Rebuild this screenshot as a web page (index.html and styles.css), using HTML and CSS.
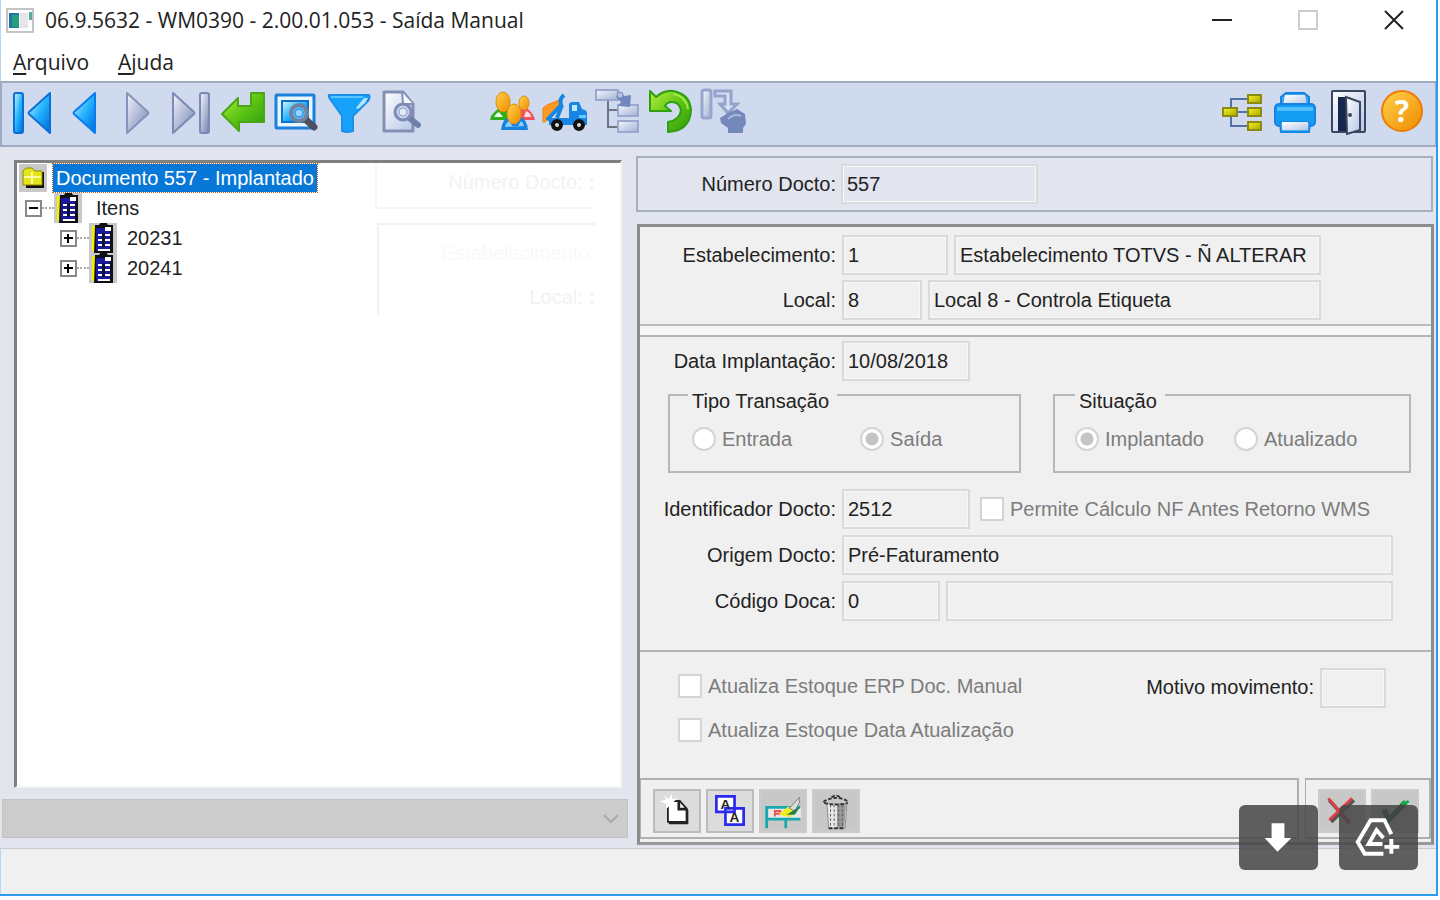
FILE: index.html
```html
<!DOCTYPE html>
<html lang="pt-BR">
<head>
<meta charset="utf-8">
<title>06.9.5632 - WM0390 - 2.00.01.053 - Saída Manual</title>
<link rel="stylesheet" href="styles.css">
</head>
<body>
<svg class="defs" aria-hidden="true">
  <defs>
    <linearGradient id="blue" x1="0" y1="0" x2="1" y2="1"><stop offset="0" stop-color="#d8f6ff"/><stop offset=".5" stop-color="#25b4ff"/><stop offset="1" stop-color="#0068d8"/></linearGradient>
    <linearGradient id="grey" x1="0" y1="0" x2="1" y2="1"><stop offset="0" stop-color="#f2f4fb"/><stop offset=".5" stop-color="#b4bdd8"/><stop offset="1" stop-color="#6d7fae"/></linearGradient>
    <linearGradient id="green" x1="0" y1="0" x2="1" y2="1"><stop offset="0" stop-color="#b8f03c"/><stop offset=".5" stop-color="#5cc414"/><stop offset="1" stop-color="#2c9a0c"/></linearGradient>
    <linearGradient id="gold" x1="0" y1="0" x2="1" y2="1"><stop offset="0" stop-color="#ffd34a"/><stop offset="1" stop-color="#f08a00"/></linearGradient>
    <linearGradient id="paper" x1="0" y1="0" x2="1" y2="1"><stop offset="0" stop-color="#ffffff"/><stop offset="1" stop-color="#b4c6e6"/></linearGradient>
    <linearGradient id="muted" x1="0" y1="0" x2="1" y2="1"><stop offset="0" stop-color="#f4f7fd"/><stop offset="1" stop-color="#9fafd4"/></linearGradient>
    <linearGradient id="node" x1="0" y1="0" x2="1" y2="1"><stop offset="0" stop-color="#f8f428"/><stop offset="1" stop-color="#a8a400"/></linearGradient>
    <symbol id="ledger" viewBox="0 0 28 30">
      <path fill="#c8c8c8" d="M0 0h28v30H0z"/><path fill="#f2f200" d="M3 3h3v25H3z"/><path fill="#101010" d="M6 2h4l2-3h5l2 3h5v28H5z"/>
      <path fill="#1818a0" d="M7 5h14v23H7z"/><path fill="#fff" d="M16 4h6v4h-6zM9 11h4v2H9zM16 11h5v2h-5zM9 16h4v2H9zM16 16h5v2h-5zM9 21h4v2H9zM16 21h5v2h-5zM9 26h12v2H9z"/>
      <path fill="#101030" d="M13 10h3v14h-3z"/>
    </symbol>
  </defs>
</svg>
<div class="window">
  <header class="titlebar">
    <svg class="app-icon" viewBox="0 0 28 25" aria-hidden="true"><path fill="#fff" stroke="#c4c4c4" stroke-width="2" d="M1 1h26v23H1z"/><path fill="#e6e6ea" d="M14 5h8v15h-8z"/><path fill="#2474a8" d="M3 5h10v15H3z"/><path fill="#23a07c" d="M6 7h7v12H6z"/><path fill="#58a8a0" d="M23 4h3v8h-3z"/></svg>
    <h1 class="title">06.9.5632 - WM0390 - 2.00.01.053 - Saída Manual</h1>
    <div class="caption-buttons">
      <button class="caption-button" aria-label="Minimizar"><svg viewBox="0 0 20 20"><path d="M0 10h20" stroke="#222" stroke-width="2"/></svg></button>
      <button class="caption-button" aria-label="Maximizar" disabled><svg viewBox="0 0 20 20"><path d="M1 1h18v18H1z" fill="none" stroke="#ccc" stroke-width="2"/></svg></button>
      <button class="caption-button" aria-label="Fechar"><svg viewBox="0 0 20 20"><path d="M1 1l18 18M19 1L1 19" stroke="#222" stroke-width="2"/></svg></button>
    </div>
  </header>
  <nav class="menubar">
    <button class="menu-item"><span class="mnemonic">A</span>rquivo</button>
    <button class="menu-item"><span class="mnemonic">A</span>juda</button>
  </nav>
  <div class="toolbar">
    <div class="tool-group">
      <button class="tool" aria-label="Primeiro"><svg viewBox="0 0 44 44"><g fill="url(#blue)" stroke="#0b6fd6" stroke-width="2" stroke-linejoin="round"><rect x="5" y="3" width="9" height="40" rx="2"/><path d="M41 3v40L20 24q-1-1 0-2z"/></g></svg></button>
      <button class="tool" aria-label="Anterior"><svg viewBox="0 0 44 44"><path d="M33 3v40L12 24q-1-1 0-2z" fill="url(#blue)" stroke="#0b7cf0" stroke-width="2" stroke-linejoin="round"/></svg></button>
      <button class="tool" aria-label="Próximo"><svg viewBox="0 0 44 44"><path d="M12 3v40l21-19q1-1 0-2z" fill="url(#grey)" stroke="#8794ba" stroke-width="2" stroke-linejoin="round"/></svg></button>
      <button class="tool" aria-label="Último"><svg viewBox="0 0 44 44"><g fill="url(#grey)" stroke="#7b89b4" stroke-width="2" stroke-linejoin="round"><path d="M5 3v40l21-19q1-1 0-2z"/><rect x="32" y="3" width="9" height="40" rx="2"/></g></svg></button>
      <button class="tool" aria-label="Vá para"><svg viewBox="0 0 44 44"><path d="M1 24L17 8v8h13V3h13v29H18v9z" fill="url(#green)" stroke="#4aa616" stroke-width="2" stroke-linejoin="round"/></svg></button>
      <button class="tool" aria-label="Pesquisar"><svg viewBox="0 0 44 44"><rect x="2" y="5" width="38" height="33" rx="1" fill="#e8f6ff" stroke="#1a80d8" stroke-width="3"/><path d="M8 11h26v21H8z" fill="url(#blue)" stroke="#1470c4" stroke-width="2"/><path d="M30 28l10 9" stroke="#4c5060" stroke-width="7" stroke-linecap="round"/><circle cx="25" cy="23" r="8" fill="#58bcf8" stroke="#71809c" stroke-width="4"/><circle cx="25" cy="23" r="4" fill="#8cd8ff" stroke="#2f7fe0"/></svg></button>
      <button class="tool" aria-label="Filtro"><svg viewBox="0 0 44 44"><path d="M2 5h40q2 3-2 7L26 26v15q-6 2-11 0V26L3 9Q1 6 2 5z" fill="#16a2fa" stroke="#1c8fe8" stroke-width="2" stroke-linejoin="round"/><path d="M4 7h32" stroke="#59c4ff" stroke-width="2"/><path d="M29 18l8-10h4l-3 5-7 6z" fill="#b8e6ff"/></svg></button>
      <button class="tool" aria-label="Detalhar"><svg viewBox="0 0 44 44"><path d="M4 2h19l10 12v27H4z" fill="url(#paper)" stroke="#8390b4" stroke-width="3" stroke-linejoin="round"/><path d="M22 2l1 12h10" fill="#f4f6fc" stroke="#8390b4" stroke-width="2"/><path d="M28 27l10 8" stroke="#6f7fac" stroke-width="6" stroke-linecap="round"/><circle cx="23" cy="22" r="8" fill="#c8d2ea" stroke="#7d8cb4" stroke-width="3"/><circle cx="23" cy="22" r="4" fill="#e4eaf8" stroke="#91a0c4"/></svg></button>
    </div>
    <div class="tool-group">
      <button class="tool" aria-label="Usuários"><svg viewBox="0 0 44 44"><path d="M0 30q0-5 9-12l12 2 1 10z" fill="#2fae1c"/><path d="M4 27q2-4 5-5l4 5z" fill="#eaffea"/><path d="M27 30l3-11 7-1q7 6 8 12z" fill="#f4515c"/><path d="M34 27l2-6q5 2 5 6z" fill="#ffe0e0"/><path d="M11 40q1-11 8-13h11q7 2 8 13z" fill="#1682e0"/><path d="M15 37q1-5 5-6l2 5h6l3-5q3 2 3 5z" fill="#8cd0ff"/><ellipse cx="13" cy="12" rx="7" ry="10" fill="url(#gold)" stroke="#e08c08"/><ellipse cx="34" cy="13" rx="5" ry="7" fill="url(#gold)" stroke="#e08c08"/><ellipse cx="24" cy="24" rx="7" ry="10" fill="url(#gold)" stroke="#e08c08"/></svg></button>
      <button class="tool" aria-label="Transporte"><svg viewBox="0 0 44 44"><path d="M0 18l4-3 12-5 1 6L2 32H0z" fill="#ff9820" stroke="#f08410"/><path d="M4 30L18 15q-2-6 3-10M19 15l-5 13" fill="none" stroke="#1587e0" stroke-width="4"/><path d="M6 28h20V14q1-2 3-2h7l3 7q5 1 5 4v12H6z" fill="#1685e4"/><path d="M29 15h5v6h-5z" fill="#b8eaff"/><path d="M36 25h7v3h-7z" fill="#65caff"/><circle cx="14" cy="35" r="4" fill="#ddd" stroke="#111" stroke-width="4"/><circle cx="36" cy="35" r="4" fill="#ddd" stroke="#111" stroke-width="4"/></svg></button>
      <button class="tool" aria-label="Estrutura" disabled><svg viewBox="0 0 44 44"><path d="M12 10v27h12M12 20h12" fill="none" stroke="#6e7484" stroke-width="2"/><g fill="url(#muted)" stroke="#9aa8ce" stroke-width="2"><rect x="0" y="0" width="22" height="10"/><rect x="22" y="15" width="20" height="11"/><rect x="22" y="31" width="20" height="11"/></g><path d="M20 7q5-8 8-1l7-1-1 12-12-1 3-4z" fill="#7288bc"/><circle cx="24" cy="5" r="3" fill="#b4c4e4" stroke="#7288bc"/></svg></button>
      <button class="tool" aria-label="Desfazer"><svg viewBox="0 0 44 44"><path d="M1 1l6 6Q15 0 24 1q17 3 18 19-1 21-23 22V32q12-2 13-12-2-8-9-8-5 0-7 4l6 5H1z" fill="url(#green)" stroke="#2f9e10" stroke-width="2" stroke-linejoin="round"/><path d="M24 4q13 2 15 15" fill="none" stroke="#a4e648" stroke-width="2"/></svg></button>
      <button class="tool" aria-label="Executar" disabled><svg viewBox="0 0 44 44"><rect x="0" y="0" width="9" height="28" rx="2" fill="url(#muted)" stroke="#97a5ce" stroke-width="3"/><path d="M13 6V1h16v13h6l-9 9-8-9h5V6z" fill="#d6e0f4" stroke="#94a3cc" stroke-width="3"/><path d="M18 28l8-5 9-4 8 5 1 10-3 4v5H26v-5l-7-5z" fill="#7488bc"/><path d="M26 29q6-6 13-3" stroke="#a9b8dc" stroke-width="2" fill="none"/></svg></button>
    </div>
    <div class="tool-group tool-group-end">
      <button class="tool" aria-label="Relacionamentos"><svg viewBox="0 0 44 44"><path d="M27 9H11v27h16M11 22h16" fill="none" stroke="#5370a8" stroke-width="2"/><g fill="url(#node)" stroke="#8c8a10" stroke-width="2"><rect x="3" y="18" width="14" height="8"/><rect x="28" y="5" width="13" height="8"/><rect x="28" y="18" width="13" height="8"/><rect x="28" y="32" width="13" height="8"/></g></svg></button>
      <button class="tool" aria-label="Imprimir"><svg viewBox="0 0 44 44"><path d="M8 15V7l5-4h18l5 4v8z" fill="#39a8f4" stroke="#1685e0" stroke-width="2"/><path d="M12 5h20l2 10H10z" fill="url(#paper)"/><rect x="2" y="14" width="40" height="22" rx="4" fill="#159df4" stroke="#1582e4" stroke-width="2"/><path d="M4 17h36v4H4z" fill="#52c0ff"/><path d="M7 32h30l-1 10H8z" fill="#48b2f6" stroke="#1888e0" stroke-width="2"/><path d="M9 32h26v8H9z" fill="url(#paper)"/></svg></button>
      <button class="tool" aria-label="Sair"><svg viewBox="0 0 44 44"><rect x="6" y="1" width="33" height="41" rx="1" fill="url(#paper)" stroke="#3c4560" stroke-width="2"/><path d="M12 7h12v34H12z" fill="#16264c"/><path d="M20 7l14 5v28l-13 4z" fill="url(#paper)" stroke="#3c4560" stroke-width="2"/><circle cx="24" cy="25" r="2" fill="#3c4560"/></svg></button>
      <button class="tool" aria-label="Ajuda"><svg viewBox="0 0 44 44"><circle cx="23" cy="21" r="20" fill="url(#gold)" stroke="#f07a08" stroke-width="2"/><text x="23" y="32" text-anchor="middle" class="help-mark">?</text></svg></button>
    </div>
  </div>

  <main class="main">
    <section class="nav-pane">
      <div class="tree" role="tree">
        <div class="ghost" aria-hidden="true">
          <div class="ghost-top">Número Docto: <b>:</b></div>
          <div class="ghost-body"><span class="ghost-faint">Estabelecimento:</span><span>Local: <b>:</b></span></div>
        </div>
        <div class="tree-row" role="treeitem">
          <svg class="folder" viewBox="0 0 28 28" aria-hidden="true"><path fill="#c8c8c8" d="M0 0h28v28H0z"/><path fill="#111" d="M7 8h18v16H7z"/><path fill="#e4e418" d="M4 7l3-3h6l3 3h7v14H4z"/><path fill="none" stroke="#fbfba0" stroke-width="2" d="M5 13h17M13 8v12"/><path fill="none" stroke="#8c8c00" d="M4 21V7l3-3h6l3 3h7v14z"/></svg>
          <span class="tree-label selected">Documento 557 - Implantado</span>
        </div>
        <div class="tree-row level-1" role="treeitem">
          <button class="expander" aria-label="Recolher"><svg viewBox="0 0 13 13"><path d="M2 6h9" stroke="#000" stroke-width="2"/></svg></button><span class="twig"></span>
          <svg class="ledger" aria-hidden="true"><use href="#ledger"/></svg><span class="tree-label">Itens</span>
        </div>
        <div class="tree-row level-2" role="treeitem">
          <button class="expander" aria-label="Expandir"><svg viewBox="0 0 13 13"><path d="M2 6h9M6 2v9" stroke="#000" stroke-width="2"/></svg></button><span class="twig"></span>
          <svg class="ledger" aria-hidden="true"><use href="#ledger"/></svg><span class="tree-label">20231</span>
        </div>
        <div class="tree-row level-2" role="treeitem">
          <button class="expander" aria-label="Expandir"><svg viewBox="0 0 13 13"><path d="M2 6h9M6 2v9" stroke="#000" stroke-width="2"/></svg></button><span class="twig"></span>
          <svg class="ledger" aria-hidden="true"><use href="#ledger"/></svg><span class="tree-label">20241</span>
        </div>
      </div>
      <div class="combo">
        <select class="combo-select" aria-label="Seleção" disabled><option></option></select>
        <svg class="combo-arrow" viewBox="0 0 16 10" aria-hidden="true"><path d="M1 1l7 7 7-7" fill="none" stroke="#aaa" stroke-width="2"/></svg>
      </div>
    </section>

    <section class="detail">
      <div class="key-box">
        <label class="label" for="docto">Número Docto:</label>
        <input class="field key-field" id="docto" value="557" readonly>
      </div>
      <form class="panel">
        <div class="section head">
          <div class="row"><label class="label" for="estab">Estabelecimento:</label><input class="field w-106" id="estab" value="1" readonly><input class="field grow" aria-label="Nome do estabelecimento" value="Estabelecimento TOTVS - Ñ ALTERAR" readonly></div>
          <div class="row"><label class="label" for="local">Local:</label><input class="field w-80" id="local" value="8" readonly><input class="field grow" aria-label="Nome do local" value="Local 8 - Controla Etiqueta" readonly></div>
        </div>
        <div class="section body">
          <div class="row"><label class="label" for="data">Data Implantação:</label><input class="field w-128" id="data" value="10/08/2018" readonly></div>
          <div class="groups">
            <fieldset class="group type-group"><legend>Tipo Transação</legend>
              <label class="choice"><input type="radio" name="tipo" disabled>Entrada</label>
              <label class="choice"><input type="radio" name="tipo" checked disabled>Saída</label>
            </fieldset>
            <fieldset class="group status-group"><legend>Situação</legend>
              <label class="choice"><input type="radio" name="situacao" checked disabled>Implantado</label>
              <label class="choice"><input type="radio" name="situacao" disabled>Atualizado</label>
            </fieldset>
          </div>
          <div class="row"><label class="label" for="ident">Identificador Docto:</label><input class="field w-128" id="ident" value="2512" readonly><label class="choice permit"><input type="checkbox" disabled>Permite Cálculo NF Antes Retorno WMS</label></div>
          <div class="row"><label class="label" for="origem">Origem Docto:</label><input class="field grow" id="origem" value="Pré-Faturamento" readonly></div>
          <div class="row"><label class="label" for="doca">Código Doca:</label><input class="field w-98" id="doca" value="0" readonly><input class="field grow" aria-label="Descrição da doca" readonly></div>
        </div>
        <div class="section extra">
          <div class="checks">
            <label class="choice"><input type="checkbox" disabled>Atualiza Estoque ERP Doc. Manual</label>
            <label class="choice"><input type="checkbox" disabled>Atualiza Estoque Data Atualização</label>
          </div>
          <div class="reason"><label for="motivo">Motivo movimento:</label><input class="field w-66" id="motivo" readonly></div>
        </div>
        <div class="actions">
          <div class="action-box action-main">
            <button type="button" class="action" aria-label="Novo"><svg viewBox="0 0 48 44"><path d="M14 11h13l8 9v14H14z" fill="#fff" stroke="#222" stroke-width="2"/><path d="M15 35h20V21M26 11v9h9" fill="none" stroke="#222" stroke-width="3"/><path d="M5 11l7-1-2-5 5 4 3-6 1 6 6-1-5 4 2 5-5-2-5 5v-6z" fill="#fff"/></svg></button>
            <button type="button" class="action" aria-label="Copiar"><svg viewBox="0 0 48 44"><g fill="#fff" stroke="#2a2af0" stroke-width="3"><path d="M9 6h20v17H9zM19 19h20v18H19z"/></g><g class="letter-icon"><text x="19" y="20" text-anchor="middle">A</text><text x="29" y="34" text-anchor="middle">A</text></g></svg></button>
            <button type="button" class="action dim" aria-label="Editar"><svg viewBox="0 0 48 44"><path d="M8 18h36v12H8z" fill="#e8e8e8"/><path d="M6 41V18h37M6 31h37M27 31v10" fill="none" stroke="#18aaaa" stroke-width="3"/><path d="M15 28v-6h6v3h-6" fill="none" stroke="#f05050" stroke-width="2"/><path d="M19 25q5-2 7-5l4-3 7 6-4 5q-7 1-14-3z" fill="#f0ec20"/><path d="M31 19L42 7v6l-5 9z" fill="#ddd" stroke="#777"/><path d="M43 17l-6 9h-9l8-5z" fill="#228048"/></svg></button>
            <button type="button" class="action dim" aria-label="Excluir"><svg viewBox="0 0 48 44"><path d="M14 14h22l-2 27H16z" fill="#e8e8e8" stroke="#888"/><path d="M25 14h10l-2 27h-8z" fill="#999"/><path d="M18 15v24M22 15v24M27 15v24M31 15v24" stroke="#555" stroke-dasharray="3 2"/><path d="M10 12q14-9 28 0M11 13q13 4 26 0M19 7q5-4 10 0M16 41h16" fill="none" stroke="#333" stroke-width="2" stroke-dasharray="4 2"/></svg></button>
          </div>
          <div class="action-box">
            <button type="button" class="action dim" aria-label="Cancelar"><svg viewBox="0 0 48 44"><path d="M10 10l22 25M37 10L12 34" stroke="#555" stroke-width="4"/><path d="M9 8l22 26M35 8L10 32" stroke="#e23c44" stroke-width="3"/></svg></button>
            <button type="button" class="action dim" aria-label="Confirmar"><svg viewBox="0 0 48 44"><path d="M12 20l5 12 18-19" fill="none" stroke="#0c5824" stroke-width="6"/><path d="M31 15l4-4M34 15l5-4" fill="none" stroke="#18a848" stroke-width="3"/></svg></button>
          </div>
        </div>
      </form>
    </section>
  </main>
  <footer class="statusbar"></footer>
  <div class="overlay">
    <button class="overlay-button" aria-label="Baixar"><svg viewBox="0 0 80 65"><path d="M33 18h13v15h7L39 47 26 33h7z" fill="#fff"/></svg></button>
    <button class="overlay-button" aria-label="Salvar no Drive"><svg viewBox="0 0 80 65"><path d="M53 29L46 15H32L19 37l7 12h19" fill="none" stroke="#fff" stroke-width="4"/><path d="M45 33l-7-8-8 14h14" fill="none" stroke="#fff" stroke-width="4"/><path d="M53 34v15M46 42h15" stroke="#fff" stroke-width="4"/></svg></button>
  </div>
</div>
</body>
</html>
```
FILE: styles.css
```css
* { box-sizing: border-box; }
body { margin: 0; background: #fff; color: #222; font: 20px/24px "Liberation Sans", Arial, sans-serif; }
button { padding: 0; border: 0; background: none; color: inherit; font: inherit; }
svg { display: block; }
.defs { position: absolute; width: 0; height: 0; }

.window {
  position: relative;
  display: flex;
  flex-direction: column;
  min-height: calc(100vh - 4px);
  margin-right: 2px;
  border: solid #2e9cec;
  border-width: 0 2px 2px 0;
  box-shadow: inset 1px 0 #b4d8f4;
}

.titlebar { display: flex; align-items: center; height: 40px; padding: 0 32px 0 6px; font-family: "Open Sans", "Noto Sans", sans-serif; }
.app-icon { width: 28px; height: 25px; }
.title { margin: 0 0 0 11px; font-size: 21px; font-weight: 400; line-height: 28px; }
.caption-buttons { display: flex; gap: 66px; margin-left: auto; }
.caption-button { width: 20px; height: 20px; }
.menubar { display: flex; gap: 29px; height: 41px; padding: 8px 13px; font-family: "Open Sans", "Noto Sans", sans-serif; font-size: 21px; line-height: 28px; }
.menu-item { display: block; line-height: 28px; }
.mnemonic { text-decoration: underline; text-underline-offset: 3px; }

.toolbar { display: flex; gap: 57px; height: 66px; padding: 0 4px 0 6px; border: 2px solid #9eabc0; border-width: 2px 1px 2px 2px; background: #d0daee; }
.tool-group { display: flex; }
.tool-group-end { margin-left: auto; }
.tool { width: 53px; height: 60px; padding: 7px 0 9px 1px; }
.tool svg { width: 44px; height: 44px; overflow: visible; }
.help-mark { font: bold 30px "Open Sans", sans-serif; fill: #fff; }

.main { display: grid; grid-template-columns: minmax(0, 626fr) minmax(0, 797fr); gap: 8px; flex: 1; padding: 9px 3px 3px 2px; background: #e2e5ee; border-bottom: 1px solid #ccc; }
.nav-pane { display: flex; flex-direction: column; gap: 11px; padding: 4px 0 7px; }
.tree { position: relative; flex: 1; margin: 0 6px 0 12px; border: solid; border-width: 3px 2px 2px 3px; border-color: #808080 #f4f4f4 #f4f4f4 #808080; background: #fff; }
.tree-row { position: relative; display: flex; align-items: center; height: 30px; }
.level-1 { padding-left: 8px; }
.level-2 { padding-left: 43px; }
.folder { width: 28px; height: 28px; margin-left: 2px; }
.ledger { width: 28px; height: 30px; }
.tree-label { margin-left: 14px; line-height: 28px; }
.selected { margin-left: 6px; padding: 0 3px; background: #0878d8; color: #fff; outline: 1px dotted #c46420; }
.expander { width: 17px; height: 17px; border: 2px solid #888; background: #fff; }
.expander svg { width: 13px; height: 13px; }
.twig { width: 12px; border-top: 2px dotted #aaa; }
.level-2 .tree-label { margin-left: 10px; }
.ghost { position: absolute; top: 0; right: 25px; width: 220px; color: #f2f2f5; }
.ghost-top { height: 46px; padding: 7px 0; border: solid #f5f6fa; border-width: 0 0 2px 2px; text-align: right; }
.ghost-body { display: flex; flex-direction: column; gap: 20px; height: 92px; margin: 14px 0 0 2px; padding-top: 16px; border: solid #f1f1f4; border-width: 2px 0 0 2px; text-align: right; }
.ghost-faint { color: #f9f9fb; }
.combo { position: relative; height: 39px; }
.combo-select { appearance: none; width: 100%; height: 100%; border: 1px solid #c2c2c2; border-radius: 0; background: #ccc; opacity: 1; }
.combo-arrow { position: absolute; right: 9px; top: 15px; width: 16px; height: 10px; }

.detail { display: flex; flex-direction: column; gap: 12px; }
.key-box { display: flex; align-items: center; gap: 5px; height: 56px; padding-left: 2px; border: 2px solid #a3b1c2; }
.label { flex: none; width: 196px; text-align: right; }
.field { width: 100%; min-width: 0; height: 40px; padding: 0 4px; border: 2px solid #dadada; outline: 1px solid #f7f7f7; outline-offset: -3px; background: #f0f0f0; color: #222; font: inherit; }
.key-field { width: 197px; background: #e2e5f0; }
.w-66 { width: 66px; }
.w-80 { width: 80px; }
.w-98 { width: 98px; }
.w-106 { width: 106px; }
.w-128 { width: 128px; }
.grow { flex: 1; }
.panel { display: flex; flex-direction: column; flex: 1; margin: 0 -1px 0 1px; border: 3px solid #8c8c8c; border-bottom-color: #999; background: #f0f0f0; }
.row { display: flex; align-items: center; gap: 6px; }
.section { padding-right: 38px; }
.head { display: grid; gap: 5px; padding: 8px 110px 4px 0; border-bottom: 2px solid #bbb; }
.body { display: grid; gap: 6px; margin-top: 9px; padding-top: 4px; padding-bottom: 29px; border: solid #b4b4b4; border-width: 2px 0; box-shadow: 0 -9px #f6f6f6; }
.groups { display: flex; gap: 32px; margin: -10px -18px 10px 28px; }
.group { display: flex; min-width: 0; margin: 0; padding: 14px 20px 20px; border: 2px solid #b8b8b8; }
.group legend { margin-left: -4px; padding: 12px 8px 0 4px; color: #222; }
.type-group { flex: 350; gap: 68px; padding-left: 22px; }
.status-group { flex: 358; gap: 30px; }
.status-group legend { margin-left: 0; }
.choice { display: flex; align-items: center; gap: 6px; color: #7c7c7c; white-space: nowrap; }
.choice input { appearance: none; flex: none; width: 24px; height: 24px; margin: 0; border: 2px solid #d4d4d4; background: #fff; }
.choice input[type="radio"] { border-radius: 50%; }
.choice input[type="radio"]:checked { background: radial-gradient(circle, #c4c4c4 6px, #fff 7px); }
.permit { margin-left: 4px; }
.extra { display: flex; justify-content: space-between; padding: 16px 45px 36px 38px; }
.checks { display: grid; gap: 20px; padding-top: 6px; }
.reason { display: flex; gap: 6px; line-height: 38px; }
.actions { display: flex; gap: 6px; flex: 1; margin-bottom: 3px; }
.action-box { display: flex; gap: 5px; padding: 9px 10px 0 12px; border: solid #b0b0b0; border-width: 2px 2px 2px 1px; }
.action-main { flex: 1; }
.action { width: 48px; height: 44px; border: 2px solid #bcbcbc; background: #dcdcdc; }
.action svg { width: 100%; height: 100%; }
.dim { background: #c8c8c8; border-color: #ccc; }
.letter-icon { font: bold 15px "Liberation Sans", sans-serif; fill: #222; }
.statusbar { height: 45px; margin-left: 1px; background: #f0f0f0; }
.overlay { position: absolute; right: 18px; bottom: 24px; display: flex; gap: 21px; }
.overlay-button { width: 79px; height: 65px; border-radius: 6px; background: rgba(70, 70, 70, .86); }
.overlay-button svg { width: 100%; height: 100%; }
```
